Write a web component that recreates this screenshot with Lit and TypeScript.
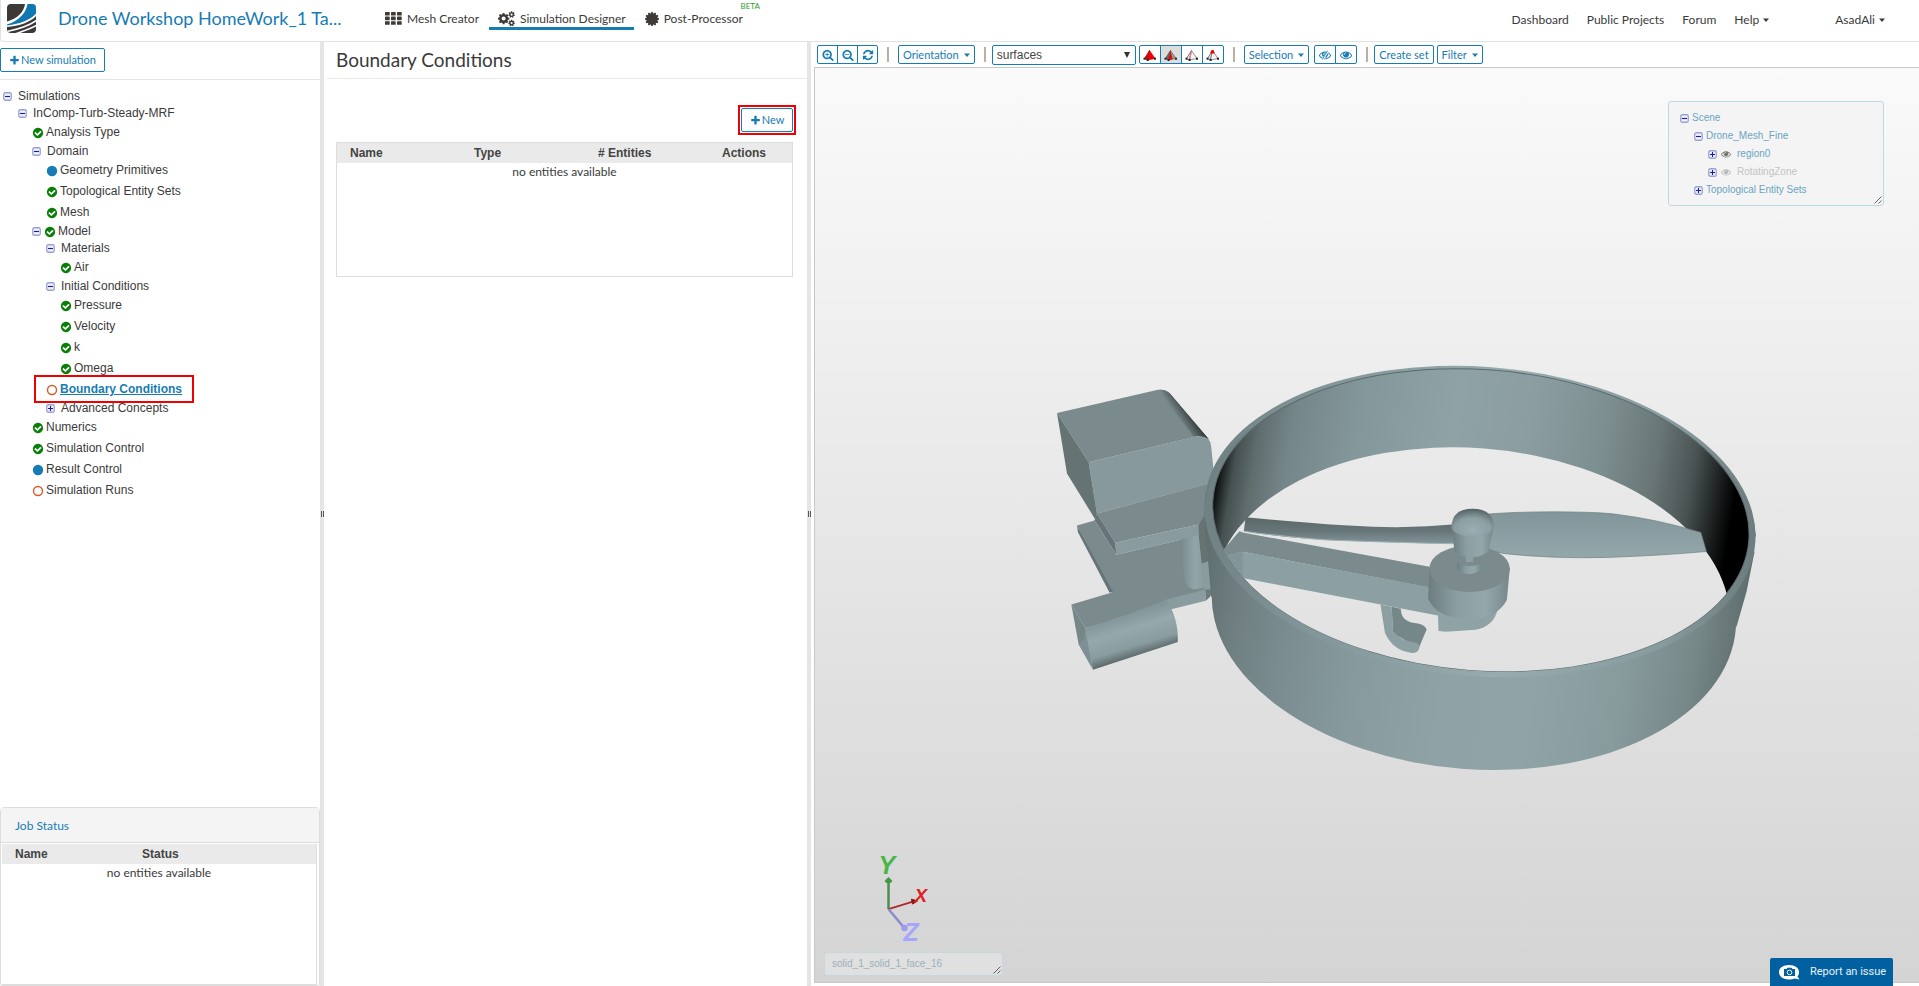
import { LitElement, html, css, svg, nothing } from "lit";
import { customElement, state } from "lit/decorators.js";
import { classMap } from "lit/directives/class-map.js";

const FA = {
  check:
    "M1412 734q0-28-18-46l-91-90q-19-19-45-19t-45 19l-408 407-226-226q-19-19-45-19t-45 19l-91 90q-18 18-18 46 0 27 18 45l362 362q19 19 45 19 27 0 46-19l543-543q18-18 18-45zm252 162q0 209-103 385.5t-279.5 279.5-385.5 103-385.5-103-279.5-279.5-103-385.5 103-385.5 279.5-279.5 385.5-103 385.5 103 279.5 279.5 103 385.5z",
  plus:
    "M1600 736v192q0 40-28 68t-68 28h-416v416q0 40-28 68t-68 28h-192q-40 0-68-28t-28-68v-416h-416q-40 0-68-28t-28-68v-192q0-40 28-68t68-28h416v-416q0-40 28-68t68-28h192q40 0 68 28t28 68v416h416q40 0 68 28t28 68z",
  refresh:
    "M1639 1056q0 5-1 7-64 268-268 434.5t-478 166.5q-146 0-282.5-55t-243.5-157l-129 129q-19 19-45 19t-45-19-19-45v-448q0-26 19-45t45-19h448q26 0 45 19t19 45-19 45l-137 137q71 66 161 102t187 36q134 0 250-65t186-179q11-17 53-117 8-23 30-23h192q13 0 22.5 9.5t9.5 22.5zm25-800v448q0 26-19 45t-45 19h-448q-26 0-45-19t-19-45 19-45l138-138q-148-137-349-137-134 0-250 65t-186 179q-11 17-53 117-8 23-30 23h-199q-13 0-22.5-9.5t-9.5-22.5v-7q65-268 270-434.5t480-166.5q146 0 284 55.5t245 156.5l130-129q19-19 45-19t45 19 19 45z",
  zoomIn:
    "M1088 800v64q0 13-9.5 22.5t-22.5 9.5h-224v224q0 13-9.5 22.5t-22.5 9.5h-64q-13 0-22.5-9.5t-9.5-22.5v-224h-224q-13 0-22.5-9.5t-9.5-22.5v-64q0-13 9.5-22.5t22.5-9.5h224v-224q0-13 9.5-22.5t22.5-9.5h64q13 0 22.5 9.5t9.5 22.5v224h224q13 0 22.5 9.5t9.5 22.5zm128 32q0-185-131.5-316.5t-316.5-131.5-316.5 131.5-131.5 316.5 131.5 316.5 316.5 131.5 316.5-131.5 131.5-316.5zm512 832q0 53-37.5 90.5t-90.5 37.5q-54 0-90-38l-343-342q-179 124-399 124-143 0-273.5-55.5t-225-150-150-225-55.5-273.5 55.5-273.5 150-225 225-150 273.5-55.5 273.5 55.5 225 150 150 225 55.5 273.5q0 220-124 399l343 343q37 37 37 90z",
  zoomOut:
    "M1088 800v64q0 13-9.5 22.5t-22.5 9.5h-576q-13 0-22.5-9.5t-9.5-22.5v-64q0-13 9.5-22.5t22.5-9.5h576q13 0 22.5 9.5t9.5 22.5zm128 32q0-185-131.5-316.5t-316.5-131.5-316.5 131.5-131.5 316.5 131.5 316.5 316.5 131.5 316.5-131.5 131.5-316.5zm512 832q0 53-37.5 90.5t-90.5 37.5q-54 0-90-38l-343-342q-179 124-399 124-143 0-273.5-55.5t-225-150-150-225-55.5-273.5 55.5-273.5 150-225 225-150 273.5-55.5 273.5 55.5 225 150 150 225 55.5 273.5q0 220-124 399l343 343q37 37 37 90z",
  eye:
    "M1664 960q-152-236-381-353 61 104 61 225 0 185-131.5 316.5t-316.5 131.5-316.5-131.5-131.5-316.5q0-121 61-225-229 117-381 353 133 205 333.5 326.5t434.5 121.5 434.5-121.5 333.5-326.5zm-720-384q0-20-14-34t-34-14q-125 0-214.5 89.5t-89.5 214.5q0 20 14 34t34 14 34-14 14-34q0-86 61-147t147-61q20 0 34-14t14-34zm848 384q0 34-20 69-140 230-376.5 368.5t-499.5 138.5-499.5-139-376.5-368q-20-35-20-69t20-69q140-229 376.5-368t499.5-139 499.5 139 376.5 368q20 35 20 69z",
};

const fa = (d: string, size = 12, extra: unknown = nothing) =>
  html`<svg width=${size} height=${size} viewBox="0 0 1792 1792" fill="currentColor" aria-hidden="true"><path d=${d} />${extra}</svg>`;

const caret = html`<svg width="6" height="4" viewBox="0 0 6 4" aria-hidden="true"><path d="M0 .5H6L3 4Z" fill="currentColor" /></svg>`;

function gearPath(cx: number, cy: number, outer: number, inner: number, teeth: number, hole: number) {
  const pts: string[] = [];
  for (let i = 0; i < teeth; i++) {
    const a = (i / teeth) * Math.PI * 2 - Math.PI / 2;
    const w = Math.PI / teeth;
    for (const [k, r] of [[-0.62, inner], [-0.42, outer], [0.42, outer], [0.62, inner]]) {
      pts.push(`${(cx + r * Math.cos(a + k * w)).toFixed(2)} ${(cy + r * Math.sin(a + k * w)).toFixed(2)}`);
    }
  }
  const ring = hole
    ? `M${cx - hole} ${cy}a${hole} ${hole} 0 1 0 ${hole * 2} 0a${hole} ${hole} 0 1 0 ${-hole * 2} 0Z`
    : "";
  return `M${pts.join("L")}Z${ring}`;
}

const gridIcon = html`<svg width="17" height="13" viewBox="0 0 17 13" fill="#3e3a37" aria-hidden="true">
  ${[0, 6, 12].map((x) => [0, 4.6, 9.2].map((y) => svg`<rect x=${x} y=${y} width="4.700" height="3.600" rx=".6" />`))}
</svg>`;

const gearsIcon = html`<svg width="17" height="16" viewBox="0 0 17 16" fill="#3e3a37" fill-rule="evenodd" aria-hidden="true">
  <path d=${gearPath(5.6, 7.6, 5.8, 4.5, 8, 2)} />
  <path d=${gearPath(13.6, 3.6, 3.3, 2.5, 7, 1.1)} />
  <path d=${gearPath(13.6, 12, 3.3, 2.5, 7, 1.1)} />
</svg>`;

const burstIcon = html`<svg width="14" height="14" viewBox="0 0 14 14" fill="#3e3a37" aria-hidden="true">
  <path d=${gearPath(7, 7, 7, 5.8, 12, 0)} />
</svg>`;

const logo = html`<svg width="29" height="29" viewBox="0 0 29 29" aria-hidden="true">
  <clipPath id="logo-clip"><rect width="29" height="29" rx="4" /></clipPath>
  <g clip-path="url(#logo-clip)">
    <rect width="29" height="29" fill="#3d3937" />
    <path d="M29 0V12C24 18 12 22 0 23V17.500C10 15 17 8 18 0Z" fill="#fff" />
    <path d="M29 0V9.500C24 15.500 13 20 0 21.500V20.500C12 17 19 9 20.500 0Z" fill="#0f78b2" />
    <path d="M30 16C22 22 12 25 0 27.500" stroke="#fff" stroke-width="1.700" fill="none" />
    <path d="M30 21C23 25 16 27 8 30" stroke="#fff" stroke-width="1.500" fill="none" />
  </g>
</svg>`;

const toggleIcon = (open: boolean) => html`<svg class="toggle" width="9" height="9" viewBox="0 0 9 9" aria-hidden="true">
  <rect x=".75" y=".75" width="7.500" height="7.500" rx="1.500" fill="#eef0fa" stroke="#9aa3d0" stroke-width="1.300" />
  <path d=${open ? "M2 4.500H7" : "M2 4.500H7M4.500 2V7"} stroke="#1a1aad" stroke-width="1.100" />
</svg>`;

const grip = html`<svg class="grip" width="8" height="8" viewBox="0 0 8 8" aria-hidden="true">
  <path d="M.5 7.500 7.500 .5M4.500 7.500 7.500 4.500" stroke="#555" stroke-width=".9" />
</svg>`;

/** Tetrahedron glyphs of the pick-mode buttons: volume, face, edge, vertex. */
const tetra = (mode: number) => html`<svg width="13" height="12" viewBox="0 0 13 12" aria-hidden="true">
  <path d="M6.500 1.500 1.500 9.500 4.500 11Z" fill=${mode === 0 ? "#c01010" : mode === 1 ? "#666" : "#e6e6e6"} stroke=${mode === 0 ? "#a00" : "#444"} stroke-width=".7" />
  <path d="M6.500 1.500 4.500 11 12 9.500Z" fill=${mode === 0 ? "#f00000" : mode === 1 ? "#999" : "#f5f5f5"} stroke=${mode === 0 ? "#c00" : "#666"} stroke-width=".7" />
  ${mode === 1 ? svg`<path d="M6.500 1.500 4.500 11 8.500 10.200Z" fill="#f00000" />` : nothing}
  ${mode === 2 ? svg`<path d="M6.500 1.500 4.500 11" stroke="#f08080" stroke-width="1.200" />` : nothing}
  ${mode === 3 ? svg`<path d="M4.300 4.600 5.200 1.200H7.800L8.800 4.600Z" fill="#f00000" />` : nothing}
  <rect x=".5" y="8.700" width="2" height="2" fill="#222" /><rect x="3.600" y="10" width="2" height="2" fill="#222" /><rect x="11" y="8.700" width="2" height="2" fill="#222" />
</svg>`;

type Status = "ok" | "info" | "todo";
interface Node {
  label: string;
  level: number;
  open?: boolean;
  status?: Status;
  active?: boolean;
}

const TREE: Node[] = [
  { label: "Simulations", level: 0, open: true },
  { label: "InComp-Turb-Steady-MRF", level: 1, open: true },
  { label: "Analysis Type", level: 2, status: "ok" },
  { label: "Domain", level: 2, open: true },
  { label: "Geometry Primitives", level: 3, status: "info" },
  { label: "Topological Entity Sets", level: 3, status: "ok" },
  { label: "Mesh", level: 3, status: "ok" },
  { label: "Model", level: 2, open: true, status: "ok" },
  { label: "Materials", level: 3, open: true },
  { label: "Air", level: 4, status: "ok" },
  { label: "Initial Conditions", level: 3, open: true },
  { label: "Pressure", level: 4, status: "ok" },
  { label: "Velocity", level: 4, status: "ok" },
  { label: "k", level: 4, status: "ok" },
  { label: "Omega", level: 4, status: "ok" },
  { label: "Boundary Conditions", level: 3, status: "todo", active: true },
  { label: "Advanced Concepts", level: 3, open: false },
  { label: "Numerics", level: 2, status: "ok" },
  { label: "Simulation Control", level: 2, status: "ok" },
  { label: "Result Control", level: 2, status: "info" },
  { label: "Simulation Runs", level: 2, status: "todo" },
];

const statusIcon = (s: Status) =>
  s === "ok"
    ? html`<span class="st ok">${fa(FA.check, 12)}</span>`
    : html`<span class="st"><svg width="12" height="12" viewBox="0 0 12 12" aria-hidden="true">${
        s === "info"
          ? svg`<circle cx="6" cy="6" r="5.200" fill="#177cb3" />`
          : svg`<circle cx="6" cy="6" r="4.500" fill="none" stroke="#dc5a28" stroke-width="1.400" />`
      }</svg></span>`;

@customElement("model-view")
export class ModelView extends LitElement {
  static styles = css`
    :host { display: block; width: 100%; height: 100%; }
    .canvas { display: block; width: 100%; height: 100%; }
    .axis { font: italic bold 25px "Liberation Sans", sans-serif; }
    .small { font-size: 19px; }
  `;
  render() {
    return html`<svg class="canvas" viewBox="815 68 1104 915" preserveAspectRatio="xMidYMid meet" role="img" aria-label="Ducted drone propeller">
      <defs>
        <linearGradient id="wall" gradientUnits="userSpaceOnUse" x1="1211" y1="490" x2="1752" y2="540">
          <stop offset="0" stop-color="#000" /><stop offset=".012" stop-color="#141818" />
          <stop offset=".035" stop-color="#465050" /><stop offset=".07" stop-color="#5f6d6d" />
          <stop offset=".13" stop-color="#75868a" /><stop offset=".25" stop-color="#84979a" />
          <stop offset=".42" stop-color="#8fa2a6" /><stop offset=".56" stop-color="#8b9da1" />
          <stop offset=".7" stop-color="#7d8e90" /><stop offset=".8" stop-color="#687675" />
          <stop offset=".87" stop-color="#4a5353" /><stop offset=".93" stop-color="#151818" />
          <stop offset=".955" stop-color="#000" /><stop offset="1" stop-color="#000" />
        </linearGradient>
        <linearGradient id="skin" gradientUnits="userSpaceOnUse" x1="1204" y1="560" x2="1756" y2="600">
          <stop offset="0" stop-color="#5f6e6f" /><stop offset=".06" stop-color="#6e7e80" />
          <stop offset=".16" stop-color="#7a8c90" /><stop offset=".3" stop-color="#879a9e" />
          <stop offset=".46" stop-color="#8fa2a6" /><stop offset=".62" stop-color="#90a3a7" />
          <stop offset=".78" stop-color="#879a9c" /><stop offset=".9" stop-color="#778889" />
          <stop offset="1" stop-color="#5c6a6a" />
        </linearGradient>
        <linearGradient id="rim" gradientUnits="userSpaceOnUse" x1="1204" y1="0" x2="1756" y2="0">
          <stop offset="0" stop-color="#708183" /><stop offset=".2" stop-color="#82969a" />
          <stop offset=".55" stop-color="#98acb0" /><stop offset=".85" stop-color="#879a9d" />
          <stop offset="1" stop-color="#6d7d7f" />
        </linearGradient>
        <linearGradient id="motor"><stop offset="0" stop-color="#6d7d7f" /><stop offset=".35" stop-color="#8b9ea1" /><stop offset=".7" stop-color="#94a8ab" /><stop offset="1" stop-color="#76878a" /></linearGradient>
        <radialGradient id="ball" cx=".5" cy=".75" r=".78"><stop offset="0" stop-color="#9ab0b4" /><stop offset=".55" stop-color="#8b9ea2" /><stop offset="1" stop-color="#4e5a5b" /></radialGradient>
        <linearGradient id="bladeL" x1="0" y1="0" x2="0" y2="1"><stop offset="0" stop-color="#5a6767" /><stop offset=".55" stop-color="#68777a" /><stop offset="1" stop-color="#839599" /></linearGradient>
        <linearGradient id="bladeR" x1="0" y1="0" x2="0" y2="1"><stop offset="0" stop-color="#82959a" /><stop offset="1" stop-color="#94a8ac" /></linearGradient>
        <linearGradient id="tube" gradientUnits="userSpaceOnUse" x1="270" y1="800" x2="308" y2="925"><stop offset="0" stop-color="#82959a" /><stop offset=".35" stop-color="#95a9ad" /><stop offset=".75" stop-color="#899ca0" /><stop offset="1" stop-color="#5b6868" /></linearGradient>
        <linearGradient id="post"><stop offset="0" stop-color="#798a8c" /><stop offset=".6" stop-color="#92a5a9" /><stop offset="1" stop-color="#8b9da0" /></linearGradient>
        <linearGradient id="fillet" gradientUnits="userSpaceOnUse" x1="440" y1="205" x2="478" y2="180"><stop offset="0" stop-color="#7b8b8d" /><stop offset="1" stop-color="#2e3535" /></linearGradient>
        <clipPath id="inside"><ellipse cx="1481" cy="520.500" rx="269" ry="150.500" transform="rotate(4.400 1481 520.500)" /></clipPath>
        <mask id="open" maskUnits="userSpaceOnUse" x="1190" y="350" width="590" height="440">
          <rect x="1190" y="350" width="590" height="440" fill="#fff" />
          <g clip-path="url(#inside)"><ellipse cx="1472" cy="608" rx="259" ry="159.500" transform="rotate(4.400 1472 608)" fill="#000" /></g>
        </mask>
      </defs>

      <g transform="translate(1030 350) scale(.33333)">
        <path d="M140 528 193 513 258 616 445 572 525 530 535 722 427 755 300 800 165 836 123 765 245 729Z" fill="#7b8b8d" />
        <path d="M140 528 248 727 238 730 143 548Z" fill="#66747a" />
        <path d="M503 528 525 490 560 600 545 640 514 642Z" fill="#657373" />
        <path d="M514 642 550 630 550 720 522 722Z" fill="#8a9ca0" />
        <path d="M452 574 503 535 522 715 490 720Q465 712 462 690Z" fill="url(#post)" />
        <path d="M405 752 525 720 527 754 420 780Z" fill="#8a9ca0" />
        <path d="M525 722 550 718 540 742 527 754Z" fill="#6b7a7b" />
        <path d="M165 836 290 795 408 752Q445 805 443 878L188 961Z" fill="url(#tube)" />
        <path d="M123 765 165 836 188 961 145 885Z" fill="#76878a" />
        <path d="M165 836 188 961 145 885 160 872Z" fill="#8597a0" opacity=".5" />
        <path d="M80 190 380 121Q405 117 420 132L535 268 505 259 175 338Z" fill="#7b8b8d" />
        <path d="M380 121Q405 117 420 132L537 270Q520 258 490 260Z" fill="url(#fillet)" />
        <path d="M175 338 490 262Q540 252 543 290L552 380 530 404 200 492Z" fill="#87999c" />
        <path d="M80 190 175 338 200 492 195 510 110 372Z" fill="#657373" />
        <path d="M200 492 550 398 530 490 505 525 255 580Z" fill="#7b8b8d" />
        <path d="M255 580 505 525 505 557 445 572 258 616Z" fill="#899b9e" />
        <path d="M200 492 255 580 258 616 193 512Z" fill="#66747a" />
      </g>

      <g mask="url(#open)">
        <ellipse cx="1474" cy="609" rx="263" ry="161" transform="rotate(4.400 1474 609)" fill="url(#skin)" />
        <path d="M1204 512 1208 563 1211 597 1260 640 1690 640 1737 627 1747 592 1755 552Z" fill="url(#skin)" />
        <ellipse cx="1480" cy="522" rx="276.500" ry="155" transform="rotate(4.400 1480 522)" fill="url(#rim)" />
        <path d="M1204.500 507A276.500 155 4.400 0 1 1756 537" fill="none" stroke="#6c7c7e" stroke-width="1" />
        <ellipse cx="1481" cy="520.500" rx="269" ry="150.500" transform="rotate(4.400 1481 520.500)" fill="url(#wall)" stroke="#5d6b6d" stroke-width="1" />
      </g>

      <g clip-path="url(#inside)">
        <g transform="translate(1200 350) scale(.3699 .33333)">
          <path d="M106 545 118 550 625 653 625 716 115 607 40 630Z" fill="#7b8b8d" />
          <path d="M115 607 625 714 650 800 115 686 60 620Z" fill="#8c9fa2" />
          <path d="M115 607 115 686 60 640 60 622Z" fill="#839598" />
          <path d="M518 772 543 778Q543 812 575 820 607 822 613 840L592 895 522 852Z" fill="#76878a" />
          <path d="M488 766 518 772 522 845Q540 875 585 880L594 890Q592 914 570 910 520 902 500 850Z" fill="#8c9fa2" />
          <path d="M643 780 645 845 665 847 745 841Q795 830 805 780Z" fill="#8fa2a5" />
          <path d="M620 655 617 748Q640 808 730 810 805 806 830 752L838 655Z" fill="url(#motor)" />
          <ellipse cx="729" cy="658" rx="109" ry="70" fill="#7b8b8d" />
          <path d="M696 636V660Q728 688 761 660V636Z" fill="url(#motor)" />
          <ellipse cx="728" cy="636" rx="33" ry="14" fill="#7b8b8d" />
          <rect x="719" y="612" width="20" height="26" fill="#8c9fa2" />
          <path d="M123 503Q400 533 530 533 620 531 690 524V583Q500 580 400 574 250 570 118 545Z" fill="url(#bladeL)" />
          <path d="M118 545Q300 572 400 574 560 580 690 583" fill="none" stroke="#9fb2b5" stroke-width="3" />
          <path d="M775 494Q850 487 950 487 1080 487 1130 495 1240 510 1355 549L1370 606Q1250 618 1100 624 950 628 820 612 790 606 770 592Z" fill="url(#bladeR)" stroke="#708183" stroke-width="2" />
          <path d="M682 535H794L780 606Q735 642 688 606Z" fill="url(#motor)" />
          <path d="M680 535Q680 478 737 478 795 478 795 535 780 562 737 562 692 560 680 535Z" fill="url(#ball)" />
        </g>
      </g>

      <g stroke-width="2" fill="none">
        <path d="M888 910V882" stroke="#4a8f4c" stroke-width="2.500" /><path d="M888 910 914 902" stroke="#b02a2a" />
        <path d="M888 910 903 928" stroke="#8d8dcc" stroke-width="2.500" />
      </g>
      <path d="M884 882 888 878 892 882 890 884H886Z" fill="#3f9a42" />
      <path d="M911 900 917 902 912 905Z" fill="#901818" stroke="#901818" />
      <circle cx="904" cy="929" r="3.300" fill="#9d9df0" />
      <text class="axis" x="878" y="875" fill="#44b748">Y</text>
      <text class="axis small" x="914" y="903" fill="#e01f1f">X</text>
      <text class="axis" x="903" y="942" fill="#a6a6fb">Z</text>
    </svg>`;
  }
}

@customElement("app-root")
export class AppRoot extends LitElement {
  @state() private pick = 1;

  static styles = css`
    :host {
      display: flex;
      flex-direction: column;
      height: 100vh;
      overflow: hidden;
      background: #fff;
      color: #3a3a3a;
      font: 12px/16px Lato, sans-serif;
    }
    * { box-sizing: border-box; }
    svg { display: block; flex: none; }
    a { color: inherit; text-decoration: none; }
    button, select { font: inherit; color: inherit; margin: 0; cursor: pointer; }
    h1, h2, h3, ul { margin: 0; padding: 0; font-weight: 400; list-style: none; }

    .top { display: flex; align-items: flex-start; flex: none; height: 42px; border-bottom: 1px solid #e2e2e2; border-left: 1px solid #e2e2e2; border-radius: 0 0 0 4px; padding: 4px 34px 0 6px; }
    .project { margin-left: 22px; width: 310px; font-size: 18px; line-height: 29px; color: #177cb3; white-space: nowrap; }
    .tabs { display: flex; margin-left: 8px; }
    .tab { position: relative; display: flex; align-items: center; gap: 5px; height: 26px; padding: 6px 8px 0 9px; border-bottom: 3px solid transparent; margin-right: 2px; white-space: nowrap; }
    .tab.on { border-color: #177cb3; }
    .beta { position: absolute; right: -9px; top: -3px; font-size: 8px; line-height: 10px; color: #2ca02c; }
    .links { display: flex; margin-left: auto; line-height: 32px; gap: 18px; }
    .links a { display: flex; align-items: center; gap: 4px; }
    .user { margin-left: 48px; }

    .main { display: grid; grid-template-columns: 320px 4px 483px 4px minmax(0, 1fr); flex: 1; min-height: 0; }
    .split { background: #e5e5e5; display: flex; align-items: center; justify-content: center; }
    .split i { width: 3px; height: 6px; border: solid #555; border-width: 0 1px; }

    .side { display: flex; flex-direction: column; min-height: 0; }
    .bar { height: 38px; padding-top: 6px; border-bottom: 1px solid #e5e5e5; flex: none; }
    .btn { display: inline-flex; align-items: center; justify-content: center; gap: 1px; height: 24px; padding: 0 8px; border: 1px solid #177cb3; border-radius: 2px; background: #fff; color: #177cb3; font-size: 11px; white-space: nowrap; }
    .tree { flex: 1; padding: 8px 0 0 3px; font: 12px/15px "Liberation Sans", Arial, sans-serif; min-height: 0; overflow: hidden; }
    .row { position: relative; display: flex; align-items: center; height: 21px; width: max-content; }
    .row.branch { height: 17px; }
    .row .toggle { margin-right: 6px; }
    .row .st { margin-right: 2px; }
    .row.branch .st { margin-left: -3px; }
    .lv1 { margin-left: 15px; } .lv2 { margin-left: 29px; } .lv3 { margin-left: 43px; } .lv4 { margin-left: 57px; }
    .ok { color: #088008; }
    .active { color: #177cb3; font-weight: 700; text-decoration: underline; }
    .active::after { content: ""; position: absolute; inset: -4px -12px -3px -12px; border: 2px solid #f00000; }

    .jobs { display: flex; flex-direction: column; height: 179px; flex: none; border: 1px solid #ddd; border-radius: 4px 4px 2px 2px; }
    .jobs h3 { height: 35px; padding: 9px 14px; background: #f4f4f4; border-bottom: 1px solid #ddd; color: #177cb3; font-size: 12px; line-height: 18px; }
    .jobs .box { margin: 1px 2px 0 1px; flex: 1; border-width: 0 1px 1px 0; }
    .box { border: 1px solid #ddd; }
    table { width: 100%; border-collapse: collapse; table-layout: fixed; }
    th { height: 20px; padding: 0 0 0 13px; background: #eaeaea; color: #444; font: 700 12px/20px "Liberation Sans", Arial, sans-serif; text-align: left; }
    td { padding: 0; text-align: center; line-height: 17px; }
    .jobs th:first-child { width: 127px; }
    .mid th { width: 124px; }
    .mid th:last-child { width: auto; }

    .mid { padding-left: 3px; }
    .mid h2 { height: 37px; padding-left: 9px; border-bottom: 1px solid #e9e9e9; font-size: 19px; line-height: 35px; }
    .new { display: flex; justify-content: flex-end; padding: 26px 11px 7px; }
    .new .btn { width: 52px; }
    .mark { padding: 1px; border: 2px solid #f00000; line-height: 0; }
    .mid .box { height: 135px; margin: 0 14px 0 9px; }

    .view { display: flex; flex-direction: column; padding: 0 0 3px 3px; min-width: 0; min-height: 0; }
    .tools { display: flex; align-items: center; height: 25px; padding: 0 3px; flex: none; color: #177cb3; }
    .tools .btn { height: 19px; padding: 0 4px; gap: 5px; }
    .group { display: flex; }
    .tools .group .btn { width: 22px; padding: 0; border-radius: 0; }
    .tools .zoom .btn { width: 21px; }
    .group .btn + .btn { margin-left: -1px; }
    .tools .group .btn:first-child { border-radius: 2px 0 0 2px; }
    .tools .group .btn:last-child { border-radius: 0 2px 2px 0; }
    .group .btn.pressed { background: #ddd; }
    .sep { width: 2px; height: 15px; margin: 0 9px; background: #aeb4ba; border-left: 1px solid #c9ab93; }
    .sep.tight { margin-right: 6px; }
    .sel { position: relative; width: 144px; margin-right: 3px; }
    .sel select { display: block; width: 100%; height: 20px; padding: 0 4px; border: 1px solid #177cb3; border-radius: 2px; background: #fff; color: #444; font: 12px/16px "Liberation Sans", Arial, sans-serif; appearance: none; }
    .sel svg { position: absolute; right: 6px; top: 7px; color: #333; pointer-events: none; }
    .tools .last { margin-left: 3px; }
    .eyes { margin-left: 5px; }

    .canvas { position: relative; flex: 1; min-height: 0; border: 1px solid #c8c8c8; border-width: 1px 0 1px 1px; background: linear-gradient(#fafafa, #d4d4d4); }
    .card { position: absolute; border: 1px solid #b8dbe6; border-radius: 3px; font: 10px/18px "Liberation Sans", Arial, sans-serif; }
    .card .grip { position: absolute; right: 1px; bottom: 1px; }
    .scene { right: 35px; top: 33px; width: 216px; height: 105px; padding: 7px 11px; background: #f4f4f4; color: #6aa5c2; }
    .scene li { display: flex; align-items: center; height: 18px; gap: 3px; }
    .s1 { padding-left: 14px; } .s2 { padding-left: 28px; }
    .eye { margin: 0 3px 0 1px; color: #77756f; }
    .off { color: #c3c3c3; } .off .eye { color: #b9b9b9; }
    .face { left: 9px; bottom: 6px; width: 179px; height: 24px; padding: 2px 7px; background: #e0e0e0; border-color: #c5d8e0; color: #9db1bb; }
    .report { position: absolute; right: 26px; bottom: -4px; display: flex; align-items: center; gap: 10px; height: 28px; width: 123px; padding: 0 9px; border: 0; border-radius: 2px 2px 0 0; background: #01609f; color: #e8f2f8; font: 11px/16px Roboto, sans-serif; white-space: nowrap; }
  `;

  private row(n: Node) {
    const branch = n.open !== undefined;
    return html`<li class=${classMap({ row: true, branch, active: !!n.active, [`lv${n.level}`]: true })}>
      ${branch ? toggleIcon(n.open!) : nothing}${n.status ? statusIcon(n.status) : nothing}<a href="#">${n.label}</a>
    </li>`;
  }

  render() {
    return html`
      <header class="top">
        ${logo}
        <h1 class="project">Drone Workshop HomeWork_1 Ta...</h1>
        <nav class="tabs">
          <a class="tab" href="#">${gridIcon}Mesh Creator</a>
          <a class="tab on" href="#">${gearsIcon}Simulation Designer</a>
          <a class="tab" href="#">${burstIcon}Post-Processor<span class="beta">BETA</span></a>
        </nav>
        <nav class="links">
          <a href="#">Dashboard</a><a href="#">Public Projects</a><a href="#">Forum</a><a href="#">Help ${caret}</a>
          <a class="user" href="#">AsadAli ${caret}</a>
        </nav>
      </header>
      <main class="main">
        <section class="side">
          <div class="bar"><button class="btn">${fa(FA.plus, 11)}New simulation</button></div>
          <ul class="tree">${TREE.map((n) => this.row(n))}</ul>
          <section class="jobs">
            <h3>Job Status</h3>
            <div class="box">
              <table>
                <thead><tr><th>Name</th><th>Status</th></tr></thead>
                <tbody><tr><td colspan="2">no entities available</td></tr></tbody>
              </table>
            </div>
          </section>
        </section>
        <div class="split"><i></i></div>
        <section class="mid">
          <h2>Boundary Conditions</h2>
          <div class="new"><div class="mark"><button class="btn">${fa(FA.plus, 11)}New</button></div></div>
          <div class="box">
            <table>
              <thead><tr><th>Name</th><th>Type</th><th># Entities</th><th>Actions</th></tr></thead>
              <tbody><tr><td colspan="4">no entities available</td></tr></tbody>
            </table>
          </div>
        </section>
        <div class="split"><i></i></div>
        <section class="view">
          <div class="tools">
            <div class="group zoom">
              <button class="btn" aria-label="Zoom in">${fa(FA.zoomIn, 12)}</button>
              <button class="btn" aria-label="Zoom out">${fa(FA.zoomOut, 12)}</button>
              <button class="btn" aria-label="Reset view">${fa(FA.refresh, 12)}</button>
            </div>
            <span class="sep"></span>
            <button class="btn">Orientation ${caret}</button>
            <span class="sep tight"></span>
            <div class="sel">
              <select aria-label="Display mode"><option>surfaces</option></select>
              <svg width="6" height="6" viewBox="0 0 6 6" aria-hidden="true"><path d="M0 0H6L3 6Z" fill="currentColor" /></svg>
            </div>
            <div class="group">
              ${["Pick volume", "Pick face", "Pick edge", "Pick vertex"].map(
                (label, i) => html`<button
                  class=${classMap({ btn: true, pressed: this.pick === i })}
                  aria-label=${label}
                  @click=${() => (this.pick = i)}
                >${tetra(i)}</button>`
              )}
            </div>
            <span class="sep"></span>
            <button class="btn">Selection ${caret}</button>
            <div class="group eyes">
              <button class="btn" aria-label="Hide selection">${fa(
                FA.eye,
                12,
                svg`<path d="M1350 250 520 1600" stroke="#fff" stroke-width="300" /><path d="M1270 250 480 1600" stroke="currentColor" stroke-width="130" />`
              )}</button>
              <button class="btn" aria-label="Show selection">${fa(FA.eye, 12)}</button>
            </div>
            <span class="sep tight"></span>
            <button class="btn">Create set</button>
            <button class="btn last">Filter ${caret}</button>
          </div>
          <div class="canvas">
            <model-view></model-view>
            <ul class="card scene">
              <li>${toggleIcon(true)}Scene</li>
              <li class="s1">${toggleIcon(true)}Drone_Mesh_Fine</li>
              <li class="s2">${toggleIcon(false)}<span class="eye">${fa(FA.eye, 10)}</span>region0</li>
              <li class="s2 off">${toggleIcon(false)}<span class="eye">${fa(FA.eye, 10)}</span>RotatingZone</li>
              <li class="s1">${toggleIcon(false)}Topological Entity Sets</li>
              ${grip}
            </ul>
            <div class="card face">solid_1_solid_1_face_16${grip}</div>
            <button class="report">
              <svg width="21" height="15" viewBox="0 0 21 15" aria-hidden="true">
                <path d="M10 0C16 0 20 3 20 7.200 20 9 19.500 10.200 18.500 11.400L20.500 14.500 15.500 13.400C14 14.100 12 14.400 10 14.400 4 14.400 0 11.300 0 7.200 0 3 4 0 10 0Z" fill="#fff" />
                <path d="M5 4H7.500L8.500 2.800H12.500L13.500 4H16V11H5Z" fill="#01609f" />
                <circle cx="10.500" cy="7.400" r="2.300" fill="none" stroke="#fff" stroke-width="1" />
              </svg>
              Report an issue
            </button>
          </div>
        </section>
      </main>
    `;
  }
}
